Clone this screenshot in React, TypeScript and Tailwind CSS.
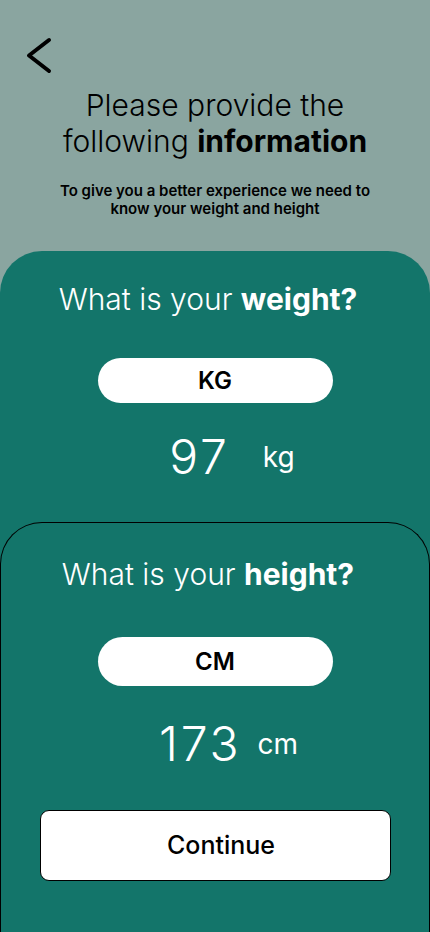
import React, { useState } from 'react'

const font = { fontFamily: 'Inter, "Noto Sans", sans-serif' }

const BackIcon = () => (
  <svg width="30" height="40" viewBox="0 0 30 40" fill="none">
    <polyline points="25,5 5,20.5 25,36" stroke="#000" strokeWidth="4" strokeLinecap="round" strokeLinejoin="round" />
  </svg>
)

const UnitPill = ({ label, tall }: { label: string; tall?: boolean }) => (
  <button
    className={
      'w-[235px] rounded-full bg-white text-black text-[24px] font-semibold flex items-center justify-center ' +
      (tall ? 'h-[49px]' : 'h-[45px]')
    }
  >
    {label}
  </button>
)

const App = () => {
  const [weight] = useState(97)
  const [height] = useState(173)

  return (
    <div style={font} className="w-[430px] h-[932px] overflow-hidden bg-[#8aa5a0] flex flex-col">
      <div className="pt-[35px] pl-[24px]">
        <BackIcon />
      </div>

      <div className="mt-[12px] text-center text-black">
        <h1 className="text-[30px] leading-[36px] font-[350]">
          Please provide the
          <br />
          following <span className="font-bold">information</span>
        </h1>
        <p className="mt-[23px] mx-auto w-[330px] text-[15px] leading-[18px] font-semibold">
          To give you a better experience we need to know your weight and height
        </p>
      </div>

      <div className="mt-[33px] flex-1 bg-[#13756a] rounded-t-[42px] flex flex-col">
        <div className="flex flex-col items-center pt-[30px] text-white">
          <h2 className="pr-[14px] text-[30px] leading-[36px] font-[350]">
            What is your <span className="font-bold">weight?</span>
          </h2>
          <div className="mt-[41px]">
            <UnitPill label="KG" />
          </div>
          <div className="mt-[25px] flex items-center gap-[33px] pl-[34px]">
            <span className="text-[48px] leading-[58px] font-light tracking-[0.06em]">{weight}</span>
            <span className="text-[28px] leading-[32px] font-normal">kg</span>
          </div>
        </div>

        <div className="mt-[36px] flex-1 border border-black border-b-0 rounded-t-[42px] bg-[#13756a] flex flex-col items-center pt-[33px] text-white">
          <h2 className="pr-[14px] text-[30px] leading-[36px] font-[350]">
            What is your <span className="font-bold">height?</span>
          </h2>
          <div className="mt-[45px]">
            <UnitPill label="CM" tall />
          </div>
          <div className="mt-[29px] flex items-center gap-[16px] pl-[27px]">
            <span className="text-[48px] leading-[58px] font-light tracking-[0.06em]">{height}</span>
            <span className="text-[28px] leading-[32px] font-normal">cm</span>
          </div>
          <button className="mt-[37px] w-[351px] h-[71px] pl-[12px] rounded-[9px] bg-white border-[1.5px] border-black text-black text-[25px] font-medium">
            Continue
          </button>
        </div>
      </div>
    </div>
  )
}

export default App
